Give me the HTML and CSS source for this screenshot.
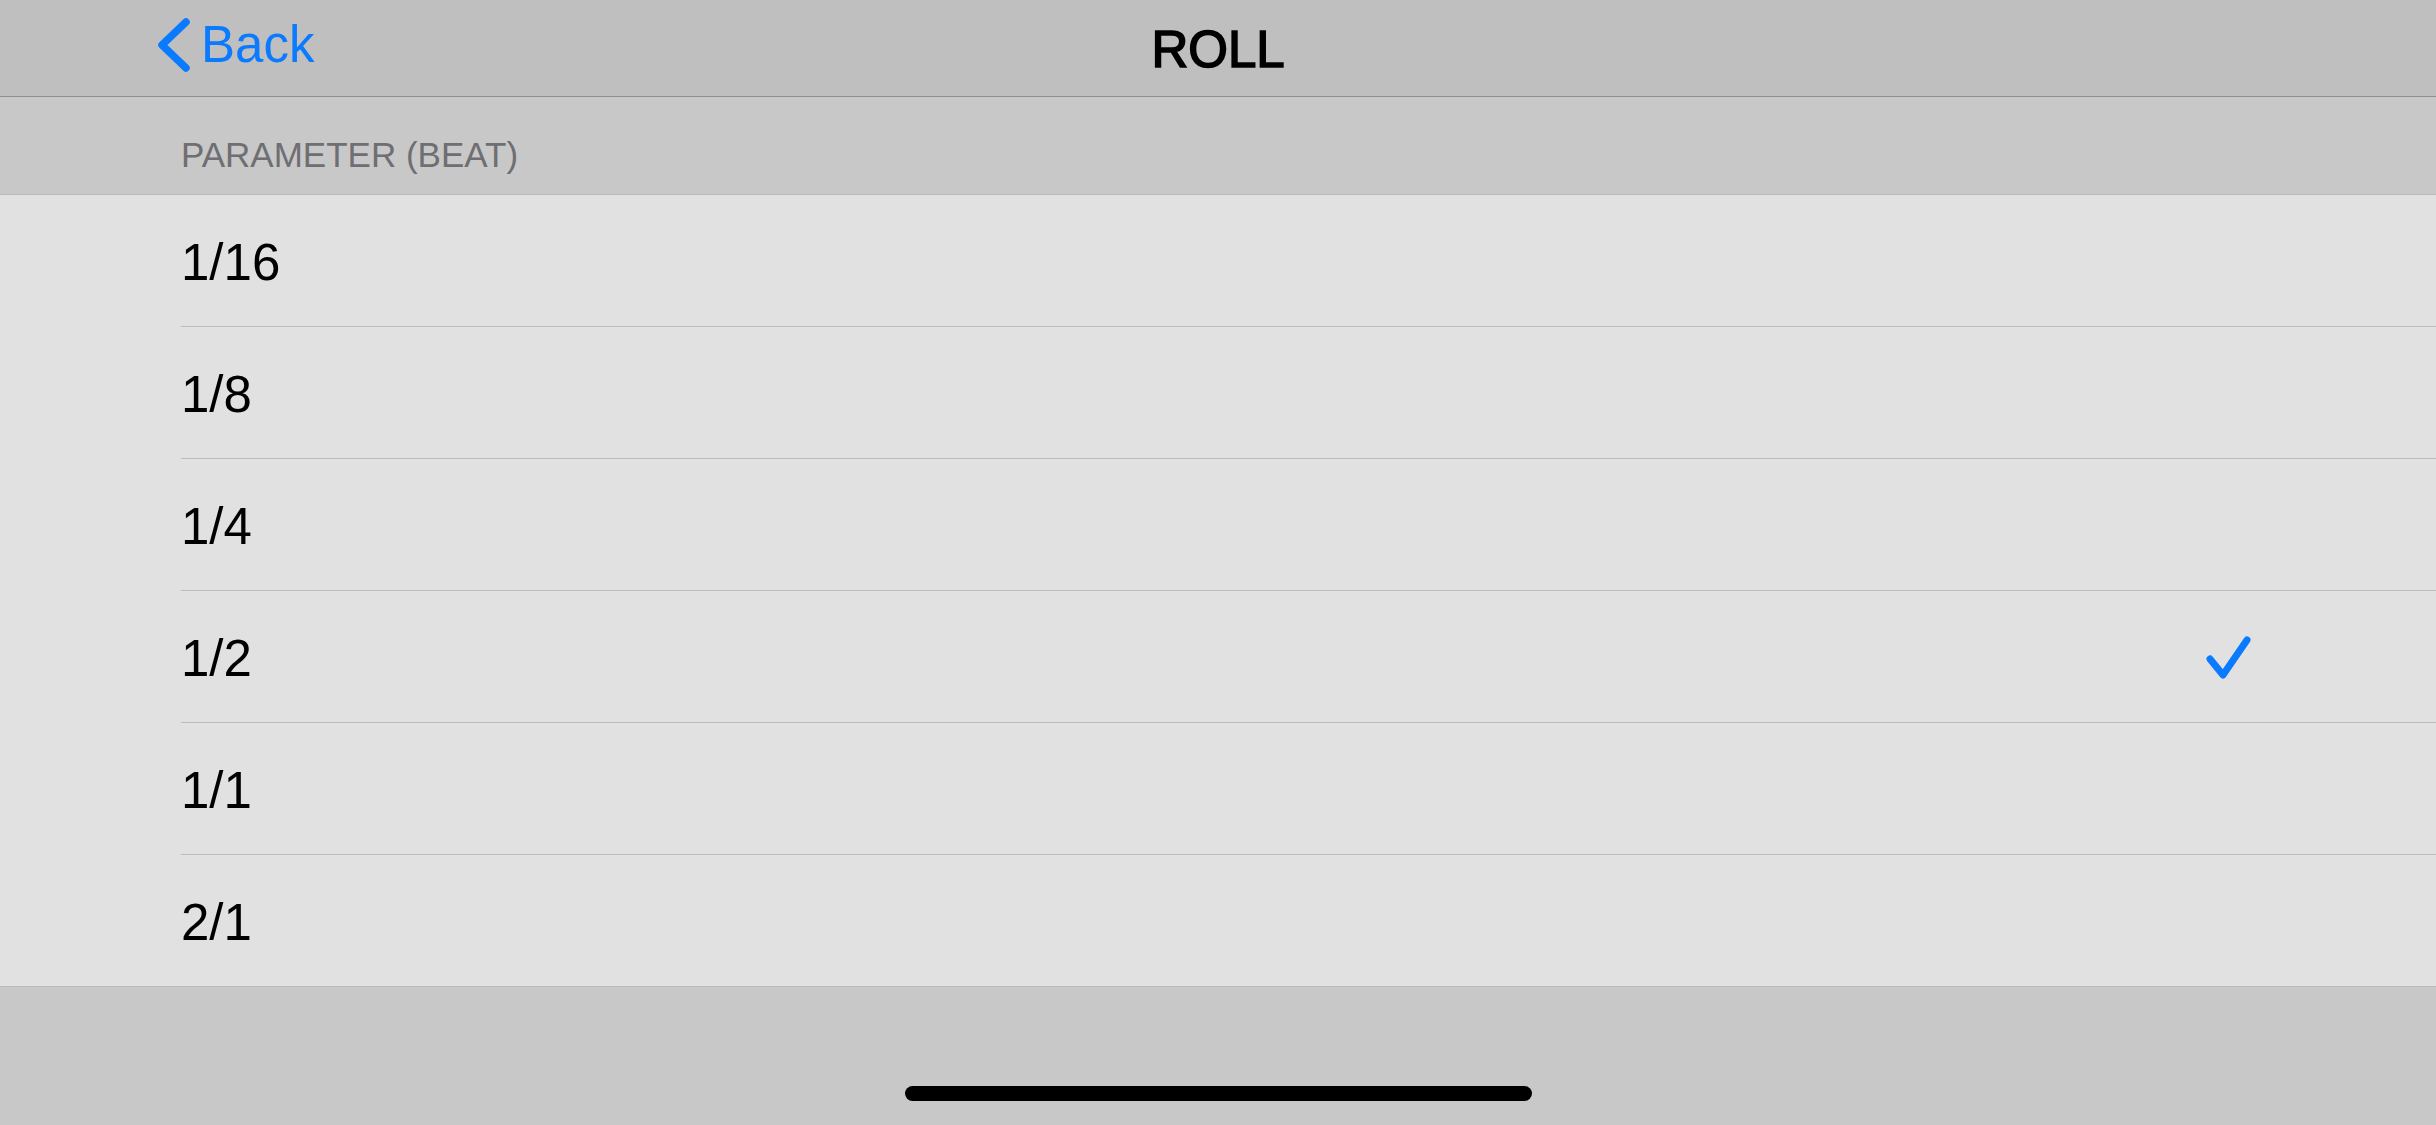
FILE: index.html
```html
<!DOCTYPE html>
<html>
<head>
<meta charset="utf-8">
<link rel="stylesheet" href="styles.css">
</head>
<body>
<div class="screen">
  <header class="navbar">
    <div class="nav-left">
      <a class="back">
        <svg class="chevron" width="40" height="60" viewBox="0 0 40 60">
          <path d="M34 7 L10 30 L34 53" fill="none" stroke="#0a7aff" stroke-width="7.5" stroke-linecap="round" stroke-linejoin="round"/>
        </svg>
        <span class="back-label">Back</span>
      </a>
    </div>
    <div class="nav-title">ROLL</div>
    <div class="nav-right"></div>
  </header>

  <div class="section-header">PARAMETER (BEAT)</div>

  <ul class="list">
    <li class="row"><div class="row-inner"><span class="row-label">1/16</span></div></li>
    <li class="row"><div class="row-inner"><span class="row-label">1/8</span></div></li>
    <li class="row"><div class="row-inner"><span class="row-label">1/4</span></div></li>
    <li class="row"><div class="row-inner"><span class="row-label">1/2</span>
      <svg class="check" width="52" height="52" viewBox="0 0 52 52">
        <path d="M10 27 L23 43 L47 8" fill="none" stroke="#0a7aff" stroke-width="7" stroke-linecap="round" stroke-linejoin="round"/>
      </svg></div></li>
    <li class="row"><div class="row-inner"><span class="row-label">1/1</span></div></li>
    <li class="row"><div class="row-inner last"><span class="row-label">2/1</span></div></li>
  </ul>

  <footer class="bottom">
    <div class="home-indicator"></div>
  </footer>
</div>
</body>
</html>
```
FILE: styles.css
```css
* { box-sizing: border-box; }
html, body {
  margin: 0;
  padding: 0;
  background: #c8c8c8;
}
body {
  font-family: "Liberation Sans", Arial, sans-serif;
  width: 2436px;
  height: 1125px;
  overflow: hidden;
}
.screen {
  display: flex;
  flex-direction: column;
  height: 1125px;
}
.navbar {
  height: 97px;
  background: #bfbfbf;
  border-bottom: 1px solid #8e8e8e;
  display: grid;
  grid-template-columns: 1fr auto 1fr;
  align-items: start;
}
.nav-left {
  padding-left: 152px;
  padding-top: 15px;
}
.back {
  display: flex;
  align-items: flex-start;
  color: #0a7aff;
  text-decoration: none;
}
.chevron {
  display: block;
  margin-top: 0;
  margin-right: 9px;
}
.back-label {
  font-size: 51px;
  line-height: 60px;
}
.nav-title {
  padding-top: 20px;
  font-size: 51px;
  line-height: 60px;
  font-weight: 400;
  -webkit-text-stroke: 1.6px #000;
  color: #000;
}
.section-header {
  height: 98px;
  background: #c8c8c8;
  border-bottom: 1px solid #bcbcbc;
  padding-left: 181px;
  padding-top: 38px;
  font-size: 35px;
  line-height: 40px;
  color: #6e6e73;
}
.list {
  list-style: none;
  margin: 0;
  padding: 0;
  background: #e1e1e1;
  border-bottom: 1px solid #bcbcbc;
}
.row {
  padding-left: 181px;
}
.row-inner {
  height: 132px;
  border-bottom: 1px solid #bcbcbc;
  display: flex;
  align-items: center;
  justify-content: space-between;
  padding-top: 4px;
  padding-right: 184px;
}
.row-inner.last {
  border-bottom: none;
  height: 131px;
}
.row-label {
  font-size: 51px;
  line-height: 60px;
  color: #000;
}
.check {
  display: block;
  margin-top: -2px;
}
.bottom {
  flex: 1;
  background: #c8c8c8;
  display: flex;
  justify-content: center;
  padding-top: 99px;
}
.home-indicator {
  width: 627px;
  height: 15px;
  border-radius: 8px;
  background: #000;
}
```
